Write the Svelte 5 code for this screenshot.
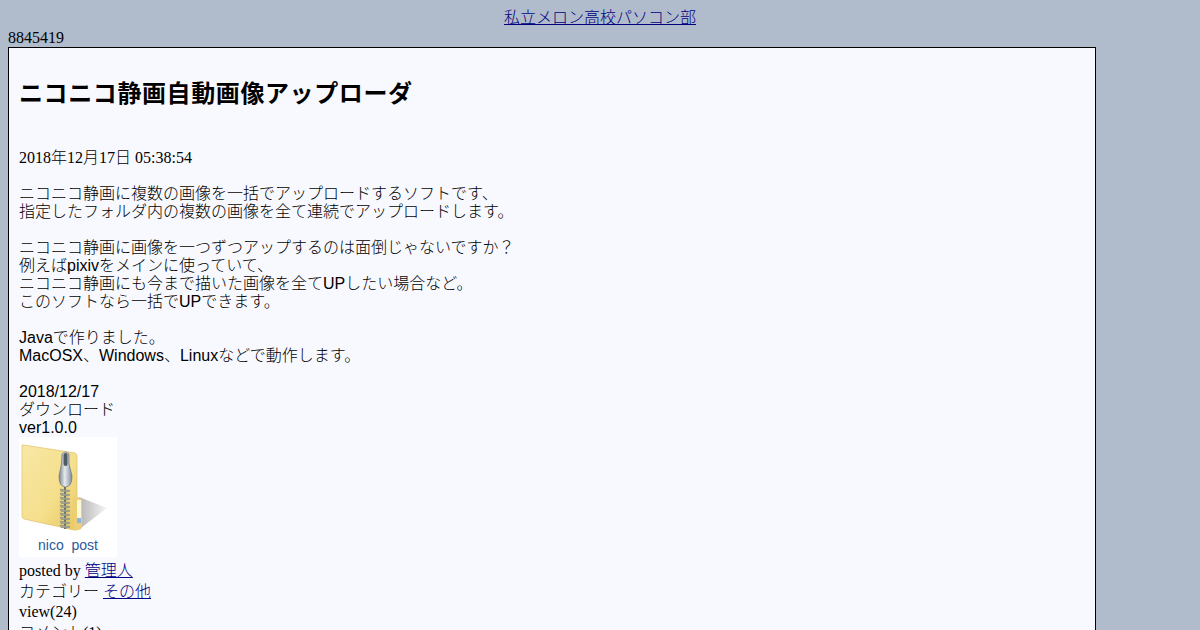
<script>
  const description = [
    ['ニコニコ静画に複数の画像を一括でアップロードするソフトです、', '指定したフォルダ内の複数の画像を全て連続でアップロードします。'],
    ['ニコニコ静画に画像を一つずつアップするのは面倒じゃないですか？', '例えばpixivをメインに使っていて、', 'ニコニコ静画にも今まで描いた画像を全てUPしたい場合など。', 'このソフトなら一括でUPできます。'],
    ['Javaで作りました。', 'MacOSX、Windows、Linuxなどで動作します。'],
    ['2018/12/17', 'ダウンロード', 'ver1.0.0']
  ];
  const teeth = Array.from({ length: 10 }, (_, i) => 52 + i * 4);
</script>

<div class="page">
  <div class="site"><a href="#top">私立メロン高校パソコン部</a></div>
  <div class="count">8845419</div>
  <main class="entry">
    <h1>ニコニコ静画自動画像アップローダ</h1>
    <div class="date">2018年12月17日 05:38:54</div>
    <div class="body">
      {#each description as para}
        <p>
          {#each para as line}
            {line}<br />
          {/each}
        </p>
      {/each}
    </div>
    <a class="download" href="#zip">
      <svg width="98" height="98" viewBox="0 0 98 98" aria-hidden="true">
        <defs>
          <linearGradient id="folder" x1="0" y1="0" x2="1" y2="1">
            <stop offset="0" stop-color="#f8e8a6" />
            <stop offset="0.6" stop-color="#f5df8c" />
            <stop offset="1" stop-color="#e6c75f" />
          </linearGradient>
          <linearGradient id="shadow" x1="0" y1="0" x2="1" y2="0">
            <stop offset="0" stop-color="#b4b4b4" />
            <stop offset="1" stop-color="#f6f6f6" />
          </linearGradient>
          <linearGradient id="pull" x1="0" y1="0" x2="1" y2="0">
            <stop offset="0" stop-color="#76838f" />
            <stop offset="0.45" stop-color="#e8ebf0" />
            <stop offset="1" stop-color="#7f8b9c" />
          </linearGradient>
        </defs>
        <path d="M60 60 L88 71 L62 91 Z" fill="url(#shadow)" />
        <path d="M3 9 Q3 7 5 8 L56 16 Q58 17 58 19 L58 91 Q58 94 55 93 L5 82 Q3 81 3 79 Z" fill="url(#folder)" stroke="#e0c06a" stroke-width="0.7" />
        <path d="M54 63 Q55 60 58 60 L61 61 Q63 62 63 65 L63 90 Q62 94 55 93 Z" fill="#edcd76" />
        <rect x="58" y="63" width="4" height="18" fill="#fbf9d6" />
        <rect x="58" y="81" width="4" height="5" fill="#8fb4dc" />
        <rect x="45" y="50" width="2" height="42" fill="#6d7266" />
        {#each teeth as y}
          <path d="M41 {y} L51 {y + 1.5} L50 {y + 3} L42 {y + 2.5} Z" fill="#a1a596" stroke="#777c6f" stroke-width="0.4" />
        {/each}
        <path d="M43 17 Q46 13 50 17 L50 27 L53 39 Q53 50 46.5 50 Q40 50 40 39 L42.5 27 Z" fill="url(#pull)" stroke="#66727f" stroke-width="0.7" />
        <rect x="44.5" y="16" width="4" height="13" rx="2" fill="#4f5a67" />
      </svg>
      <span>nico&nbsp;&nbsp;post</span>
    </a>
    <div class="meta">
      <div>posted by <a href="#admin">管理人</a></div>
      <div>カテゴリー <a href="#other">その他</a></div>
      <div>view(24)</div>
      <div>コメント(1)</div>
    </div>
  </main>
</div>

<style>
  :global(body) {
    background: #b0bccc;
    font-family: "Liberation Serif", "Noto Sans CJK JP", serif;
    font-size: 16px;
    font-weight: 300;
    color: #000;
  }

  a {
    color: #000080;
  }

  .page {
    padding: 8px 8px 0;
    height: 622px;
    overflow: hidden;
  }

  .site {
    text-align: center;
    line-height: 20px;
    margin-bottom: 1px;
  }

  .count {
    line-height: 18px;
  }

  .entry {
    width: 1066px;
    border: 1px solid #000;
    background: #f8f9ff;
    padding: 10px;
  }

  h1 {
    margin: 16px 0 35px;
    font: bold 24px/40px "Liberation Sans", "Noto Sans CJK JP", sans-serif;
    letter-spacing: 0.6px;
  }

  .date {
    line-height: 18px;
    margin-bottom: 18px;
  }

  .body {
    font-family: "Liberation Sans", "Noto Sans CJK JP", sans-serif;
    line-height: 18px;
  }

  p {
    margin: 0 0 18px;
  }

  p:last-child {
    margin: 0;
  }

  .download {
    display: flex;
    flex-direction: column;
    align-items: center;
    width: 98px;
    height: 120px;
    background: #fff;
    text-decoration: none;
    color: #2a5a9c;
    font: 14px/18px "Liberation Sans", sans-serif;
  }

  .download span {
    margin-top: 1px;
  }

  .meta {
    line-height: 20.5px;
    margin-top: 4px;
  }
</style>
